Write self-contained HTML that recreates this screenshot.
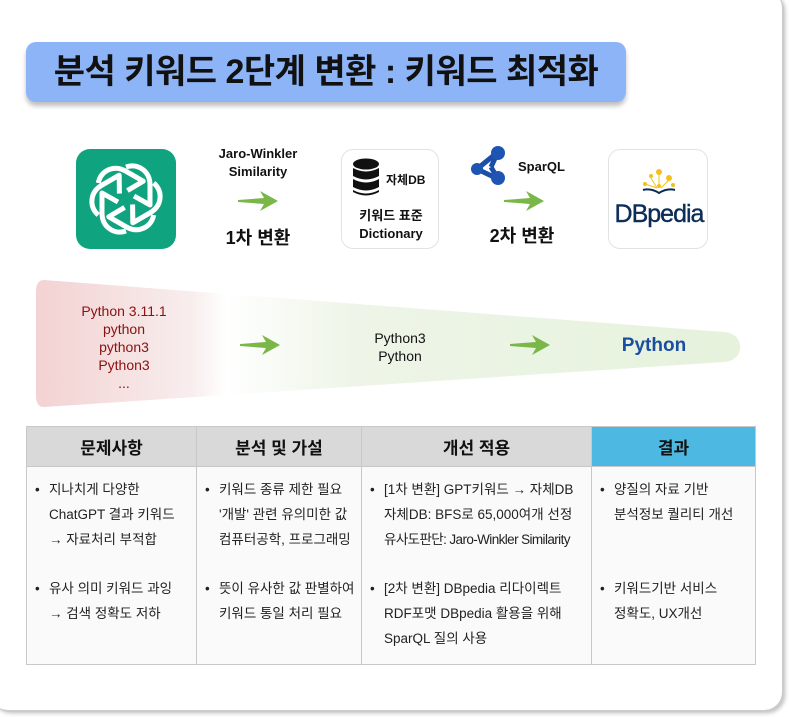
<!DOCTYPE html>
<html><head><meta charset="utf-8"><style>
*{margin:0;padding:0;box-sizing:border-box}
body{width:790px;height:717px;background:#fff;font-family:"Liberation Sans","Noto Sans CJK KR",sans-serif;position:relative;overflow:hidden;color:#111}
.card{position:absolute;left:-10px;top:-10px;width:792px;height:720px;border-radius:18px;background:#fff;box-shadow:2px 2px 0 #ccc,3px 3px 4px #bbb}
.abs{position:absolute}
.title{left:26px;top:42px;width:600px;height:60px;background:#8db4f7;border-radius:10px;box-shadow:0 4px 5px rgba(0,0,0,.25);font-size:34px;font-weight:bold;text-align:center;line-height:60px;letter-spacing:-0.5px}
.box{border:1px solid #e2e2e2;border-radius:12px;background:#fff;width:100px;height:100px;top:149px}
.c{text-align:center}
table{position:absolute;left:26px;top:426px;border-collapse:collapse;font-size:13.5px}
th{height:40px;background:#d9d9d9;font-size:17px;border:1px solid #c8c8c8;font-weight:bold}
td{background:#fafafa;border:1px solid #c8c8c8;vertical-align:top;height:198px;padding:10px 0 0 6px;line-height:25px;color:#222}
ul{list-style:none}
li{position:relative;padding-left:16px}
li:before{content:"•";position:absolute;left:2px}
.gap{height:24px}
</style></head><body>
<div class="card"></div>
<div class="abs title">분석 키워드 2단계 변환 : 키워드 최적화</div>

<div class="abs" style="left:76px;top:149px;width:100px;height:100px;background:#10a37f;border-radius:14px">
<svg width="100" height="100" viewBox="0 0 100 100"><g fill="none" stroke="#fff" stroke-width="5" stroke-linejoin="round">
<g id="p"><path d="M50 18 C62 14 74 22 74 36 L74 56 L58 47"/></g>
<use href="#p" transform="rotate(60 50 50)"/><use href="#p" transform="rotate(120 50 50)"/><use href="#p" transform="rotate(180 50 50)"/><use href="#p" transform="rotate(240 50 50)"/><use href="#p" transform="rotate(300 50 50)"/>
</g></svg></div>

<div class="abs c" style="left:198px;top:145px;width:120px;font-size:13px;font-weight:bold;line-height:18px">Jaro-Winkler<br>Similarity</div>
<svg class="abs" style="left:236px;top:189px" width="46" height="24"><path d="M2 11 L28 9 L24 2 L42 12 L24 22 L28 15 L2 13Z" fill="#7ab648"/></svg>
<div class="abs c" style="left:198px;top:224px;width:120px;font-size:18px;font-weight:bold">1차 변환</div>

<div class="abs box" style="left:341px;width:98px">
<svg class="abs" style="left:10px;top:8px" width="28" height="40"><g fill="#111"><ellipse cx="14" cy="6" rx="13" ry="5.5"/><path d="M1 10 Q14 17 27 10 V18 Q14 25 1 18Z"/><path d="M1 21 Q14 28 27 21 V29 Q14 36 1 29Z"/><path d="M1 32 Q14 39 27 32 V34 Q14 41 1 34Z"/></g></svg>
<div class="abs" style="left:44px;top:21px;font-size:12px;font-weight:bold">자체DB</div>
<div class="abs c" style="left:0;top:57px;width:98px;font-size:13px;font-weight:bold;line-height:18px">키워드 표준<br>Dictionary</div>
</div>

<svg class="abs" style="left:469px;top:145px" width="40" height="40"><g stroke="#1a4ea8" stroke-width="5"><line x1="8" y1="24" x2="29" y2="7"/><line x1="8" y1="24" x2="29" y2="34"/><line x1="29" y1="7" x2="22" y2="22"/><line x1="22" y1="22" x2="29" y2="34"/></g><g fill="#1e55b4"><circle cx="29" cy="8" r="7"/><circle cx="8" cy="24" r="6"/><circle cx="29" cy="33" r="7"/></g></svg>
<div class="abs" style="left:518px;top:159px;font-size:13px;font-weight:bold">SparQL</div>
<svg class="abs" style="left:502px;top:189px" width="46" height="24"><path d="M2 11 L28 9 L24 2 L42 12 L24 22 L28 15 L2 13Z" fill="#7ab648"/></svg>
<div class="abs c" style="left:462px;top:222px;width:120px;font-size:18px;font-weight:bold">2차 변환</div>

<div class="abs box" style="left:608px">
<svg class="abs" style="left:30px;top:18px" width="40" height="30"><g fill="#f2c11b"><circle cx="20" cy="4" r="3"/><circle cx="12" cy="8" r="2"/><circle cx="30" cy="10" r="3"/><circle cx="6" cy="16" r="2"/><circle cx="20" cy="18" r="2"/><circle cx="34" cy="17" r="2"/></g><g stroke="#f2c11b" stroke-width="1"><path d="M20 6 V20 M12 10 L18 20 M30 12 L22 20 M6 16 L18 20"/></g><path d="M4 22 Q12 20 20 25 Q28 20 36 22" stroke="#0c2d57" stroke-width="2" fill="none"/></svg>
<div class="abs c" style="left:0;top:50px;width:100px;font-size:25px;color:#0c2d57;letter-spacing:-1px;-webkit-text-stroke:0.4px #0c2d57">DBpedia</div>
</div>

<svg class="abs" style="left:0;top:270px" width="790" height="150">
<defs><linearGradient id="g" x1="0" x2="1"><stop offset="0" stop-color="#f3d2d2"/><stop offset=".22" stop-color="#f8eded"/><stop offset=".27" stop-color="#fff"/><stop offset=".45" stop-color="#eef5e8"/><stop offset="1" stop-color="#e6f2dc"/></linearGradient></defs>
<path d="M44 10 L724 62 Q740 64 740 77 Q740 90 724 92 L44 137 Q36 137 36 125 L36 22 Q36 10 44 10Z" fill="url(#g)"/>
</svg>
<div class="abs c" style="left:64px;top:302px;width:120px;font-size:14px;line-height:18px;color:#8b1010">Python 3.11.1<br>python<br>python3<br>Python3<br>...</div>
<svg class="abs" style="left:238px;top:333px" width="46" height="24"><path d="M2 11 L28 9 L24 2 L42 12 L24 22 L28 15 L2 13Z" fill="#7ab648"/></svg>
<div class="abs c" style="left:340px;top:329px;width:120px;font-size:14px;line-height:18px">Python3<br>Python</div>
<svg class="abs" style="left:508px;top:333px" width="46" height="24"><path d="M2 11 L28 9 L24 2 L42 12 L24 22 L28 15 L2 13Z" fill="#7ab648"/></svg>
<div class="abs c" style="left:594px;top:335px;width:120px;font-size:19px;font-weight:bold;color:#1b4ea0">Python</div>

<table>
<tr><th style="width:170px">문제사항</th><th style="width:165px">분석 및 가설</th><th style="width:230px">개선 적용</th><th style="width:164px;background:#4db9e3">결과</th></tr>
<tr>
<td><ul><li>지나치게 다양한<br>ChatGPT 결과 키워드<br>→ 자료처리 부적합</li></ul><div class="gap"></div><ul><li>유사 의미 키워드 과잉<br>→ 검색 정확도 저하</li></ul></td>
<td><ul><li>키워드 종류 제한 필요<br>'개발' 관련 유의미한 값<br>컴퓨터공학, 프로그래밍</li></ul><div class="gap"></div><ul><li>뜻이 유사한 값 판별하여<br>키워드 통일 처리 필요</li></ul></td>
<td><ul><li>[1차 변환] GPT키워드 → 자체DB<br>자체DB: BFS로 65,000여개 선정<br><span style="letter-spacing:-0.6px">유사도판단: Jaro-Winkler Similarity</span></li></ul><div class="gap"></div><ul><li>[2차 변환] DBpedia 리다이렉트<br>RDF포맷 DBpedia 활용을 위해<br>SparQL 질의 사용</li></ul></td>
<td><ul><li>양질의 자료 기반<br>분석정보 퀄리티 개선</li></ul><div style="height:49px"></div><ul><li>키워드기반 서비스<br>정확도, UX개선</li></ul></td>
</tr></table>
</body></html>
